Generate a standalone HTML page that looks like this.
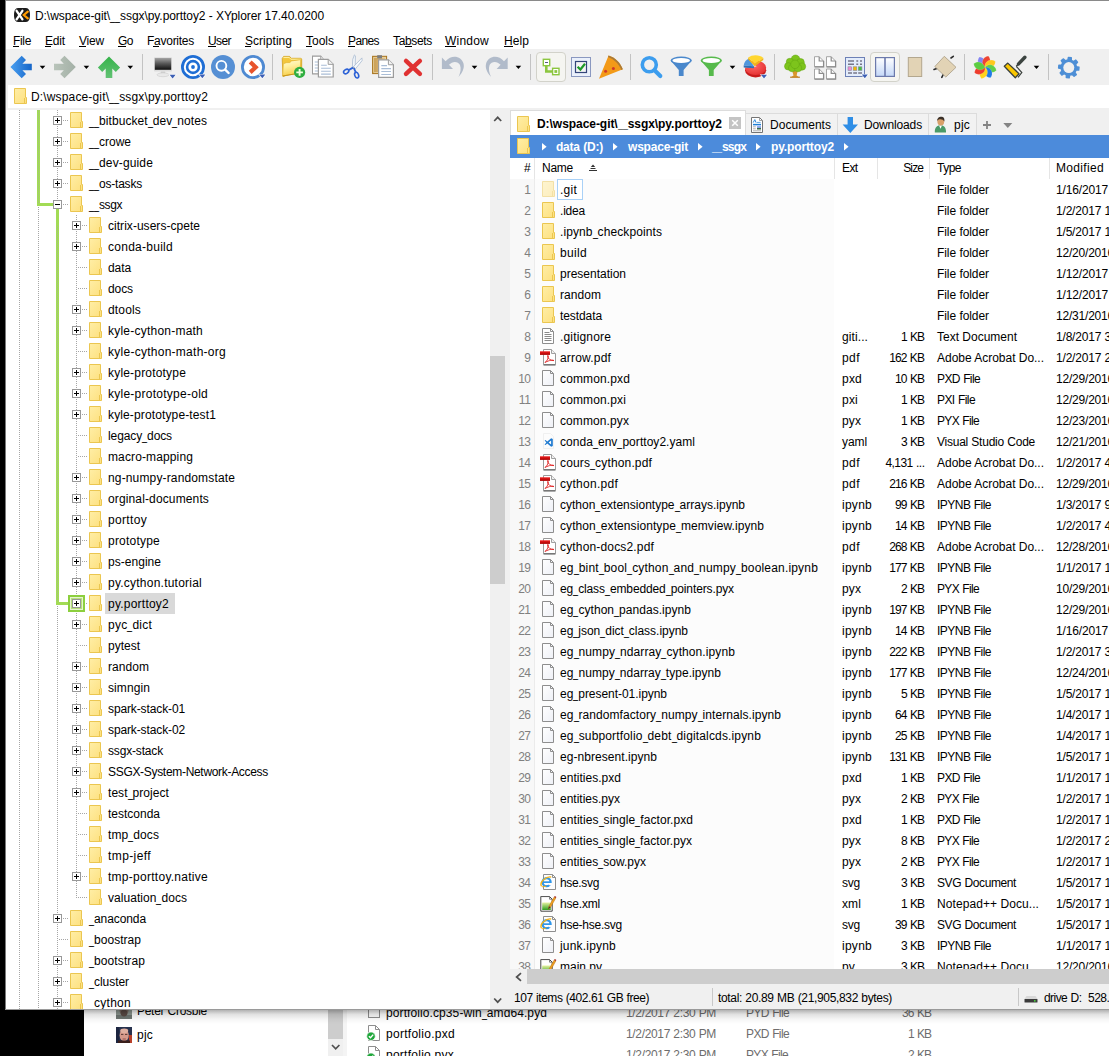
<!DOCTYPE html>
<html><head><meta charset="utf-8"><title>XYplorer</title>
<style>
html,body{margin:0;padding:0}
body{width:1109px;height:1056px;overflow:hidden;position:relative;background:#fff;font-family:"Liberation Sans", sans-serif;font-size:12px}
.t{position:absolute;white-space:pre;line-height:21px;height:21px;font-family:"Liberation Sans", sans-serif;font-size:12px}
div,svg,span{box-sizing:border-box}

.vd{position:absolute;width:1px;background:repeating-linear-gradient(to bottom,#a6a6a6 0 1px,transparent 1px 2px)}
.hd{position:absolute;height:1px;background:repeating-linear-gradient(to right,#a6a6a6 0 1px,transparent 1px 2px)}

.u{display:inline-block;width:5px;transform:scaleX(.75);transform-origin:0 50%;letter-spacing:0}
</style></head><body>
<svg width="0" height="0" style="position:absolute"><defs>
<linearGradient id="fg" x1="0" y1="0" x2="1" y2="1"><stop offset="0" stop-color="#ffeea6"/><stop offset="1" stop-color="#fde07f"/></linearGradient>
<symbol id="fold" viewBox="0 0 13 16"><path d="M.5 .5H11.5V9.5H12.5V15.5H.5Z" fill="url(#fg)" stroke="#ebc650"/><path d="M10.5 10V15" stroke="#ebc650" fill="none"/></symbol>
<symbol id="plus" viewBox="0 0 9 9"><rect x=".5" y=".5" width="8" height="8" fill="#fff" stroke="#989898"/><path d="M2 4.5H7M4.5 2V7" stroke="#000"/></symbol>
<symbol id="minus" viewBox="0 0 9 9"><rect x=".5" y=".5" width="8" height="8" fill="#fff" stroke="#989898"/><path d="M2 4.5H7" stroke="#000"/></symbol>
</defs></svg><svg width="0" height="0" style="position:absolute"><defs>
<linearGradient id="pgG" x1="0" y1="0" x2="1" y2="1"><stop offset="0" stop-color="#ffffff"/><stop offset="1" stop-color="#eef0f6"/></linearGradient>
<linearGradient id="nppG" x1="0" y1="0" x2="0" y2="1"><stop offset="0" stop-color="#e6f2a0"/><stop offset="1" stop-color="#2e9e1e"/></linearGradient>
<linearGradient id="redG" x1="0" y1="0" x2="0" y2="1"><stop offset="0" stop-color="#f02020"/><stop offset="1" stop-color="#a80000"/></linearGradient>
<symbol id="blank" viewBox="0 0 18 18"><path d="M2.5 .5H10.5L13.5 3.5V15.5H2.5Z" fill="url(#pgG)" stroke="#8e8e8e"/><path d="M10.5 .5V3.5H13.5" fill="none" stroke="#8e8e8e"/></symbol>
<symbol id="txt" viewBox="0 0 18 18"><path d="M2.5 .5H10.5L13.5 3.5V15.5H2.5Z" fill="#fff" stroke="#8e8e8e"/><path d="M10.5 .5V3.5H13.5" fill="none" stroke="#8e8e8e"/><path d="M4.5 4.5H9.5M4.5 6.5H11.5M4.5 8.5H11.5M4.5 10.5H11.5M4.5 12.5H11.5" stroke="#8a8a8a"/></symbol>
<symbol id="pdf" viewBox="0 0 18 18"><path d="M3.5 .5H11.5L15.5 4.5V15.5H3.5Z" fill="#fff" stroke="#9a9a9a"/><path d="M3.5 16H15.5" stroke="#555" stroke-width="1"/><path d="M11.5 .5V4.5H15.5" fill="#f0f0f0" stroke="#a0a0a0"/><rect x="0" y="2.3" width="10" height="3.6" fill="url(#redG)"/><path d="M5 13.5C7.5 11.5 8.6 8.6 8.3 6.8C8.1 6 7.3 6.3 7.5 7.3C8 9.6 10.5 11.8 14 11.6C13 10.8 9.5 11 5 13.5Z" fill="none" stroke="#e02020" stroke-width=".9"/></symbol>
<symbol id="vsc" viewBox="0 0 18 18"><path d="M3.5 .5H10.5L13.5 3.5V15.5H3.5Z" fill="#fcfcfc" stroke="#f0f0f0"/><path d="M11.2 5.2 12.8 6V13L11.2 13.8 7.3 10.4 5.4 11.9 4.6 11.4 6.4 9.5 4.6 7.6 5.4 7.1 7.3 8.6ZM11.1 7.5 8.6 9.5 11.1 11.5Z" fill="#1f7ad0" fill-rule="evenodd"/></symbol>
<symbol id="ie" viewBox="0 0 18 18"><path d="M3.5 .5H12.5L15.5 3.5V15.5H3.5Z" fill="#fdfdfd" stroke="#8e8e8e"/><path d="M12.5 .5V3.5H15.5" fill="none" stroke="#8e8e8e"/><circle cx="6.6" cy="8.2" r="4" fill="#fdfdfd" stroke="#2f96ea" stroke-width="2.3"/><rect x="3" y="7.3" width="8" height="1.7" fill="#2f96ea"/><path d="M7.6 9.1H12V11.2H9Z" fill="#fdfdfd"/><path d="M1.4 12C-.8 8.5 6 2 11.2 3" fill="none" stroke="#f2b41c" stroke-width="1.4"/><path d="M1.4 12C2.2 13.2 4.6 12.8 6.4 11.8" fill="none" stroke="#f2b41c" stroke-width="1"/></symbol>
<symbol id="npp" viewBox="0 0 18 18"><path d="M.8 1.5H9.5L12.2 4.2V16.2H.8Z" fill="#fff" stroke="#444" stroke-width="1"/><path d="M2 1V2.2M4 1V2.2M6 1V2.2M8 1V2.2" stroke="#777" stroke-width=".9"/><rect x="2.2" y="7.5" width="8.6" height="7.5" fill="url(#nppG)"/><path d="M9.5 1.5V4.2H12.2" fill="none" stroke="#666" stroke-width=".8"/><path d="M8.2 14.3 9 11.2 14.2 2 15.8 3 10.6 12.2Z" fill="#f0a020" stroke="#b87010" stroke-width=".5"/><path d="M14.2 2 14.8 .9 16.4 1.9 15.8 3Z" fill="#a01818"/><path d="M8.2 14.3 9 11.2 10.6 12.2Z" fill="#333"/></symbol>
</defs></svg>
<div style="position:absolute;left:0px;top:0px;width:1109px;height:1056px;background:#fff;"></div><div style="position:absolute;left:84px;top:1009px;width:1025px;height:47px;background:#fff;"></div><div style="position:absolute;left:84px;top:1009px;width:1025px;height:9px;background:linear-gradient(#c6c6c6,#e9e9e9 45%,#fff)"></div><div style="position:absolute;left:0px;top:0px;width:5px;height:1056px;background:#000;"></div><div style="position:absolute;left:0px;top:1009px;width:84px;height:47px;background:#000;"></div><div style="position:absolute;left:5px;top:0px;width:1104px;height:1px;background:#8a8a8a;"></div><div style="position:absolute;left:5px;top:0px;width:1px;height:1009px;background:#7a7a7a;"></div><div style="position:absolute;left:6px;top:49px;width:1103px;height:36px;background:#f0f0f0;"></div><div style="position:absolute;left:6px;top:85px;width:1103px;height:23px;background:#f0f0f0;"></div><div style="position:absolute;left:8px;top:85px;width:1101px;height:23px;background:#fff;"></div><div style="position:absolute;left:6px;top:108px;width:1103px;height:2px;background:#f0f0f0;"></div><div style="position:absolute;left:5px;top:1009px;width:1104px;height:1px;background:#9a9a9a;"></div><span class="t" style="left:35px;top:6px;color:#000;letter-spacing:-0.069px;word-spacing:0.069px;">D:\wspace-git\<span class="u">_</span><span class="u">_</span>ssgx\py.porttoy2 - XYplorer 17.40.0200</span><span class="t" style="left:13px;top:31px;color:#000;letter-spacing:-0.336px;">File</span><div style="position:absolute;left:13px;top:46px;width:6px;height:1px;background:#000;"></div><span class="t" style="left:45px;top:31px;color:#000;letter-spacing:-0.172px;">Edit</span><div style="position:absolute;left:45px;top:46px;width:6px;height:1px;background:#000;"></div><span class="t" style="left:79px;top:31px;color:#000;letter-spacing:-0.199px;">View</span><div style="position:absolute;left:79px;top:46px;width:7px;height:1px;background:#000;"></div><span class="t" style="left:118px;top:31px;color:#000;letter-spacing:-0.508px;">Go</span><div style="position:absolute;left:118px;top:46px;width:8px;height:1px;background:#000;"></div><span class="t" style="left:147px;top:31px;color:#000;letter-spacing:-0.262px;">Favorites</span><div style="position:absolute;left:153px;top:46px;width:6px;height:1px;background:#000;"></div><span class="t" style="left:208px;top:31px;color:#000;letter-spacing:-0.586px;">User</span><div style="position:absolute;left:208px;top:46px;width:8px;height:1px;background:#000;"></div><span class="t" style="left:245px;top:31px;color:#000;letter-spacing:0.035px;">Scripting</span><div style="position:absolute;left:245px;top:46px;width:6px;height:1px;background:#000;"></div><span class="t" style="left:306px;top:31px;color:#000;letter-spacing:-0.003px;">Tools</span><div style="position:absolute;left:306px;top:46px;width:6px;height:1px;background:#000;"></div><span class="t" style="left:348px;top:31px;color:#000;letter-spacing:-0.606px;">Panes</span><div style="position:absolute;left:348px;top:46px;width:7px;height:1px;background:#000;"></div><span class="t" style="left:393px;top:31px;color:#000;letter-spacing:-0.337px;">Tabsets</span><div style="position:absolute;left:405px;top:46px;width:7px;height:1px;background:#000;"></div><span class="t" style="left:445px;top:31px;color:#000;letter-spacing:0.219px;">Window</span><div style="position:absolute;left:445px;top:46px;width:11px;height:1px;background:#000;"></div><span class="t" style="left:504px;top:31px;color:#000;letter-spacing:0.078px;">Help</span><div style="position:absolute;left:504px;top:46px;width:9px;height:1px;background:#000;"></div><svg style="position:absolute;left:14px;top:8px" width="16" height="14"><path d="M4 0H12C14.8 0 16 3 16 7S14.8 14 12 14H4C1.2 14 0 11 0 7S1.2 0 4 0Z" fill="#1c1c1c"/><path d="M2.6 2.8 8.4 11.4M8.4 2.8 2.6 11.4" stroke="#fff" stroke-width="2.3" stroke-linecap="round"/><path d="M13.8 3.6 9.8 7 13.8 10.4" fill="none" stroke="#ff9a00" stroke-width="2.2" stroke-linecap="round"/></svg><span class="t" style="left:31px;top:87px;color:#000;letter-spacing:0.149px;">D:\wspace-git\<span class="u">_</span><span class="u">_</span>ssgx\py.porttoy2</span><div style="position:absolute;left:6px;top:110px;width:484px;height:899px;overflow:hidden;background:#fff"><div style="position:absolute;left:-6px;top:-110px;width:1109px;height:1056px"><div class="vd" style="left:19px;top:110px;height:900px"></div><div class="vd" style="left:38px;top:205px;height:805px"></div><div class="vd" style="left:57px;top:110px;height:900px"></div><div class="vd" style="left:76px;top:215px;height:683px"></div><div class="hd" style="left:63px;top:120px;width:6px"></div><svg style="position:absolute;left:70px;top:112px;" width="13" height="16"><use href="#fold"/></svg><span class="t" style="left:89px;top:111px;color:#000;letter-spacing:0.074px;"><span class="u">_</span><span class="u">_</span>bitbucket<span class="u">_</span>dev<span class="u">_</span>notes</span><div class="hd" style="left:63px;top:141px;width:6px"></div><svg style="position:absolute;left:70px;top:133px;" width="13" height="16"><use href="#fold"/></svg><span class="t" style="left:89px;top:132px;color:#000;letter-spacing:-0.003px;"><span class="u">_</span><span class="u">_</span>crowe</span><div class="hd" style="left:63px;top:162px;width:6px"></div><svg style="position:absolute;left:70px;top:154px;" width="13" height="16"><use href="#fold"/></svg><span class="t" style="left:89px;top:153px;color:#000;letter-spacing:0.142px;"><span class="u">_</span><span class="u">_</span>dev-guide</span><div class="hd" style="left:63px;top:183px;width:6px"></div><svg style="position:absolute;left:70px;top:175px;" width="13" height="16"><use href="#fold"/></svg><span class="t" style="left:89px;top:174px;color:#000;letter-spacing:-0.211px;"><span class="u">_</span><span class="u">_</span>os-tasks</span><div class="hd" style="left:63px;top:204px;width:6px"></div><svg style="position:absolute;left:70px;top:196px;" width="13" height="16"><use href="#fold"/></svg><span class="t" style="left:89px;top:195px;color:#000;letter-spacing:-0.422px;"><span class="u">_</span><span class="u">_</span>ssgx</span><div class="hd" style="left:82px;top:225px;width:6px"></div><svg style="position:absolute;left:89px;top:217px;" width="13" height="16"><use href="#fold"/></svg><span class="t" style="left:108px;top:216px;color:#000;letter-spacing:0.036px;">citrix-users-cpete</span><div class="hd" style="left:82px;top:246px;width:6px"></div><svg style="position:absolute;left:89px;top:238px;" width="13" height="16"><use href="#fold"/></svg><span class="t" style="left:108px;top:237px;color:#000;letter-spacing:0.268px;">conda-build</span><div class="hd" style="left:78px;top:267px;width:10px"></div><svg style="position:absolute;left:89px;top:259px;" width="13" height="16"><use href="#fold"/></svg><span class="t" style="left:108px;top:258px;color:#000;letter-spacing:-0.09px;">data</span><div class="hd" style="left:78px;top:288px;width:10px"></div><svg style="position:absolute;left:89px;top:280px;" width="13" height="16"><use href="#fold"/></svg><span class="t" style="left:108px;top:279px;color:#000;letter-spacing:-0.09px;">docs</span><div class="hd" style="left:82px;top:309px;width:6px"></div><svg style="position:absolute;left:89px;top:301px;" width="13" height="16"><use href="#fold"/></svg><span class="t" style="left:108px;top:300px;color:#000;letter-spacing:0.161px;">dtools</span><div class="hd" style="left:82px;top:330px;width:6px"></div><svg style="position:absolute;left:89px;top:322px;" width="13" height="16"><use href="#fold"/></svg><span class="t" style="left:108px;top:321px;color:#000;letter-spacing:0.227px;">kyle-cython-math</span><div class="hd" style="left:78px;top:351px;width:10px"></div><svg style="position:absolute;left:89px;top:343px;" width="13" height="16"><use href="#fold"/></svg><span class="t" style="left:108px;top:342px;color:#000;letter-spacing:0.264px;">kyle-cython-math-org</span><div class="hd" style="left:82px;top:372px;width:6px"></div><svg style="position:absolute;left:89px;top:364px;" width="13" height="16"><use href="#fold"/></svg><span class="t" style="left:108px;top:363px;color:#000;letter-spacing:0.188px;">kyle-prototype</span><div class="hd" style="left:82px;top:393px;width:6px"></div><svg style="position:absolute;left:89px;top:385px;" width="13" height="16"><use href="#fold"/></svg><span class="t" style="left:108px;top:384px;color:#000;letter-spacing:0.256px;">kyle-prototype-old</span><div class="hd" style="left:82px;top:414px;width:6px"></div><svg style="position:absolute;left:89px;top:406px;" width="13" height="16"><use href="#fold"/></svg><span class="t" style="left:108px;top:405px;color:#000;letter-spacing:0.13px;">kyle-prototype-test1</span><div class="hd" style="left:78px;top:435px;width:10px"></div><svg style="position:absolute;left:89px;top:427px;" width="13" height="16"><use href="#fold"/></svg><span class="t" style="left:108px;top:426px;color:#000;letter-spacing:-0.105px;">legacy<span class="u">_</span>docs</span><div class="hd" style="left:78px;top:456px;width:10px"></div><svg style="position:absolute;left:89px;top:448px;" width="13" height="16"><use href="#fold"/></svg><span class="t" style="left:108px;top:447px;color:#000;letter-spacing:0.125px;">macro-mapping</span><div class="hd" style="left:82px;top:477px;width:6px"></div><svg style="position:absolute;left:89px;top:469px;" width="13" height="16"><use href="#fold"/></svg><span class="t" style="left:108px;top:468px;color:#000;letter-spacing:0.147px;">ng-numpy-randomstate</span><div class="hd" style="left:82px;top:498px;width:6px"></div><svg style="position:absolute;left:89px;top:490px;" width="13" height="16"><use href="#fold"/></svg><span class="t" style="left:108px;top:489px;color:#000;letter-spacing:0.134px;">orginal-documents</span><div class="hd" style="left:82px;top:519px;width:6px"></div><svg style="position:absolute;left:89px;top:511px;" width="13" height="16"><use href="#fold"/></svg><span class="t" style="left:108px;top:510px;color:#000;letter-spacing:0.33px;">porttoy</span><div class="hd" style="left:82px;top:540px;width:6px"></div><svg style="position:absolute;left:89px;top:532px;" width="13" height="16"><use href="#fold"/></svg><span class="t" style="left:108px;top:531px;color:#000;letter-spacing:0.217px;">prototype</span><div class="hd" style="left:82px;top:561px;width:6px"></div><svg style="position:absolute;left:89px;top:553px;" width="13" height="16"><use href="#fold"/></svg><span class="t" style="left:108px;top:552px;color:#000;letter-spacing:0.031px;">ps-engine</span><div class="hd" style="left:82px;top:582px;width:6px"></div><svg style="position:absolute;left:89px;top:574px;" width="13" height="16"><use href="#fold"/></svg><span class="t" style="left:108px;top:573px;color:#000;letter-spacing:0.232px;">py.cython.tutorial</span><div class="hd" style="left:82px;top:603px;width:6px"></div><div style="position:absolute;left:105px;top:593px;width:70px;height:21px;background:#d9d9d9;"></div><svg style="position:absolute;left:89px;top:595px;" width="13" height="16"><use href="#fold"/></svg><span class="t" style="left:108px;top:594px;color:#000;letter-spacing:0.229px;">py.porttoy2</span><div class="hd" style="left:82px;top:624px;width:6px"></div><svg style="position:absolute;left:89px;top:616px;" width="13" height="16"><use href="#fold"/></svg><span class="t" style="left:108px;top:615px;color:#000;letter-spacing:0.232px;">pyc<span class="u">_</span>dict</span><div class="hd" style="left:78px;top:645px;width:10px"></div><svg style="position:absolute;left:89px;top:637px;" width="13" height="16"><use href="#fold"/></svg><span class="t" style="left:108px;top:636px;color:#000;letter-spacing:-0.003px;">pytest</span><div class="hd" style="left:82px;top:666px;width:6px"></div><svg style="position:absolute;left:89px;top:658px;" width="13" height="16"><use href="#fold"/></svg><span class="t" style="left:108px;top:657px;color:#000;letter-spacing:0.052px;">random</span><div class="hd" style="left:82px;top:687px;width:6px"></div><svg style="position:absolute;left:89px;top:679px;" width="13" height="16"><use href="#fold"/></svg><span class="t" style="left:108px;top:678px;color:#000;letter-spacing:0.092px;">simngin</span><div class="hd" style="left:82px;top:708px;width:6px"></div><svg style="position:absolute;left:89px;top:700px;" width="13" height="16"><use href="#fold"/></svg><span class="t" style="left:108px;top:699px;color:#000;letter-spacing:-0.122px;">spark-stack-01</span><div class="hd" style="left:82px;top:729px;width:6px"></div><svg style="position:absolute;left:89px;top:721px;" width="13" height="16"><use href="#fold"/></svg><span class="t" style="left:108px;top:720px;color:#000;letter-spacing:-0.122px;">spark-stack-02</span><div class="hd" style="left:82px;top:750px;width:6px"></div><svg style="position:absolute;left:89px;top:742px;" width="13" height="16"><use href="#fold"/></svg><span class="t" style="left:108px;top:741px;color:#000;letter-spacing:-0.169px;">ssgx-stack</span><div class="hd" style="left:82px;top:771px;width:6px"></div><svg style="position:absolute;left:89px;top:763px;" width="13" height="16"><use href="#fold"/></svg><span class="t" style="left:108px;top:762px;color:#000;letter-spacing:-0.309px;">SSGX-System-Network-Access</span><div class="hd" style="left:82px;top:792px;width:6px"></div><svg style="position:absolute;left:89px;top:784px;" width="13" height="16"><use href="#fold"/></svg><span class="t" style="left:108px;top:783px;color:#000;letter-spacing:0.057px;">test<span class="u">_</span>project</span><div class="hd" style="left:78px;top:813px;width:10px"></div><svg style="position:absolute;left:89px;top:805px;" width="13" height="16"><use href="#fold"/></svg><span class="t" style="left:108px;top:804px;color:#000;letter-spacing:-0.005px;">testconda</span><div class="hd" style="left:78px;top:834px;width:10px"></div><svg style="position:absolute;left:89px;top:826px;" width="13" height="16"><use href="#fold"/></svg><span class="t" style="left:108px;top:825px;color:#000;letter-spacing:0.089px;">tmp<span class="u">_</span>docs</span><div class="hd" style="left:78px;top:855px;width:10px"></div><svg style="position:absolute;left:89px;top:847px;" width="13" height="16"><use href="#fold"/></svg><span class="t" style="left:108px;top:846px;color:#000;letter-spacing:0.4px;">tmp-jeff</span><div class="hd" style="left:82px;top:876px;width:6px"></div><svg style="position:absolute;left:89px;top:868px;" width="13" height="16"><use href="#fold"/></svg><span class="t" style="left:108px;top:867px;color:#000;letter-spacing:0.269px;">tmp-porttoy.native</span><div class="hd" style="left:78px;top:897px;width:10px"></div><svg style="position:absolute;left:89px;top:889px;" width="13" height="16"><use href="#fold"/></svg><span class="t" style="left:108px;top:888px;color:#000;letter-spacing:0.046px;">valuation<span class="u">_</span>docs</span><div class="hd" style="left:63px;top:918px;width:6px"></div><svg style="position:absolute;left:70px;top:910px;" width="13" height="16"><use href="#fold"/></svg><span class="t" style="left:89px;top:909px;color:#000;letter-spacing:-0.09px;"><span class="u">_</span>anaconda</span><div class="hd" style="left:59px;top:939px;width:10px"></div><svg style="position:absolute;left:70px;top:931px;" width="13" height="16"><use href="#fold"/></svg><span class="t" style="left:89px;top:930px;color:#000;letter-spacing:0.037px;"><span class="u">_</span>boostrap</span><div class="hd" style="left:63px;top:960px;width:6px"></div><svg style="position:absolute;left:70px;top:952px;" width="13" height="16"><use href="#fold"/></svg><span class="t" style="left:89px;top:951px;color:#000;letter-spacing:0.106px;"><span class="u">_</span>bootstrap</span><div class="hd" style="left:63px;top:981px;width:6px"></div><svg style="position:absolute;left:70px;top:973px;" width="13" height="16"><use href="#fold"/></svg><span class="t" style="left:89px;top:972px;color:#000;letter-spacing:-0.049px;"><span class="u">_</span>cluster</span><div class="hd" style="left:63px;top:1002px;width:6px"></div><svg style="position:absolute;left:70px;top:994px;" width="13" height="16"><use href="#fold"/></svg><span class="t" style="left:89px;top:993px;color:#000;letter-spacing:0.273px;"><span class="u">_</span>cython</span><div style="position:absolute;left:37px;top:110px;width:3px;height:96px;background:#a2db55;"></div><div style="position:absolute;left:37px;top:203px;width:16px;height:3px;background:#a2db55;"></div><div style="position:absolute;left:56px;top:209px;width:3px;height:396px;background:#a2db55;"></div><div style="position:absolute;left:56px;top:602px;width:12px;height:3px;background:#a2db55;"></div><div class="vd" style="left:38px;top:110px;height:94px;opacity:.55"></div><div class="vd" style="left:57px;top:226px;height:376px;opacity:.55"></div><div style="position:absolute;left:68px;top:595px;width:17px;height:17px;background:#b7e07c;border:2px solid #8ccf3e;box-shadow:inset 0 0 0 1px #e6f5cf"></div><svg style="position:absolute;left:53px;top:116px;" width="9" height="9"><use href="#plus"/></svg><svg style="position:absolute;left:53px;top:137px;" width="9" height="9"><use href="#plus"/></svg><svg style="position:absolute;left:53px;top:158px;" width="9" height="9"><use href="#plus"/></svg><svg style="position:absolute;left:53px;top:179px;" width="9" height="9"><use href="#plus"/></svg><svg style="position:absolute;left:53px;top:200px;" width="9" height="9"><use href="#minus"/></svg><svg style="position:absolute;left:72px;top:221px;" width="9" height="9"><use href="#plus"/></svg><svg style="position:absolute;left:72px;top:242px;" width="9" height="9"><use href="#plus"/></svg><svg style="position:absolute;left:72px;top:305px;" width="9" height="9"><use href="#plus"/></svg><svg style="position:absolute;left:72px;top:326px;" width="9" height="9"><use href="#plus"/></svg><svg style="position:absolute;left:72px;top:368px;" width="9" height="9"><use href="#plus"/></svg><svg style="position:absolute;left:72px;top:389px;" width="9" height="9"><use href="#plus"/></svg><svg style="position:absolute;left:72px;top:410px;" width="9" height="9"><use href="#plus"/></svg><svg style="position:absolute;left:72px;top:473px;" width="9" height="9"><use href="#plus"/></svg><svg style="position:absolute;left:72px;top:494px;" width="9" height="9"><use href="#plus"/></svg><svg style="position:absolute;left:72px;top:515px;" width="9" height="9"><use href="#plus"/></svg><svg style="position:absolute;left:72px;top:536px;" width="9" height="9"><use href="#plus"/></svg><svg style="position:absolute;left:72px;top:557px;" width="9" height="9"><use href="#plus"/></svg><svg style="position:absolute;left:72px;top:578px;" width="9" height="9"><use href="#plus"/></svg><svg style="position:absolute;left:72px;top:599px;" width="9" height="9"><use href="#plus"/></svg><svg style="position:absolute;left:72px;top:620px;" width="9" height="9"><use href="#plus"/></svg><svg style="position:absolute;left:72px;top:662px;" width="9" height="9"><use href="#plus"/></svg><svg style="position:absolute;left:72px;top:683px;" width="9" height="9"><use href="#plus"/></svg><svg style="position:absolute;left:72px;top:704px;" width="9" height="9"><use href="#plus"/></svg><svg style="position:absolute;left:72px;top:725px;" width="9" height="9"><use href="#plus"/></svg><svg style="position:absolute;left:72px;top:746px;" width="9" height="9"><use href="#plus"/></svg><svg style="position:absolute;left:72px;top:767px;" width="9" height="9"><use href="#plus"/></svg><svg style="position:absolute;left:72px;top:788px;" width="9" height="9"><use href="#plus"/></svg><svg style="position:absolute;left:72px;top:872px;" width="9" height="9"><use href="#plus"/></svg><svg style="position:absolute;left:53px;top:914px;" width="9" height="9"><use href="#plus"/></svg><svg style="position:absolute;left:53px;top:956px;" width="9" height="9"><use href="#plus"/></svg><svg style="position:absolute;left:53px;top:977px;" width="9" height="9"><use href="#plus"/></svg><svg style="position:absolute;left:53px;top:998px;" width="9" height="9"><use href="#plus"/></svg></div></div><svg style="position:absolute;left:0;top:0" width="1109" height="90" viewBox="0 0 1109 90"><defs>
<linearGradient id="gb" x1="0" y1="0" x2="1" y2="0"><stop offset="0" stop-color="#4a9ff0"/><stop offset="1" stop-color="#1565c8"/></linearGradient>
<linearGradient id="gg" x1="0" y1="0" x2="0" y2="1"><stop offset="0" stop-color="#35b34a"/><stop offset="1" stop-color="#62c274"/></linearGradient>
<linearGradient id="gf" x1="0" y1="0" x2="1" y2="0"><stop offset="0" stop-color="#b9c4ba"/><stop offset="1" stop-color="#a3b0a6"/></linearGradient>
<linearGradient id="mon" x1="0" y1="0" x2="0" y2="1"><stop offset="0" stop-color="#a4a4a4"/><stop offset=".45" stop-color="#5a5a5a"/><stop offset="1" stop-color="#101010"/></linearGradient>
<linearGradient id="fy" x1="0" y1="0" x2="1" y2="1"><stop offset="0" stop-color="#fff0a0"/><stop offset="1" stop-color="#f2c230"/></linearGradient>
<linearGradient id="fyf" x1="0" y1="0" x2=".25" y2="1"><stop offset="0" stop-color="#fffbd8"/><stop offset=".45" stop-color="#fff0a0"/><stop offset="1" stop-color="#f7cf4c"/></linearGradient><linearGradient id="pane" x1="0" y1="0" x2="0" y2="1"><stop offset="0" stop-color="#ffffff"/><stop offset="1" stop-color="#c4d8f8"/></linearGradient>
<linearGradient id="clipb" x1="0" y1="0" x2="1" y2="0"><stop offset="0" stop-color="#c79a4e"/><stop offset="1" stop-color="#e4c790"/></linearGradient>
<radialGradient id="pie" cx=".4" cy=".35" r=".8"><stop offset="0" stop-color="#ff6a6a"/><stop offset="1" stop-color="#e02828"/></radialGradient>
<path id="dd" d="M0 0H5.6L2.8 3.2Z" fill="#000"/>
<path id="bdd" d="M0 0H6L3 3.6Z" fill="#3c5fb4" stroke="#fff" stroke-width="1.2" stroke-opacity=".85" paint-order="stroke"/>
<g id="doc"><path d="M.6 .6H10.4L15.4 5.6V18.4H.6Z" fill="#fff" stroke="#9c9c9c" stroke-width="1.2"/><path d="M10.4 .6V5.6H15.4" fill="#f2f2f2" stroke="#9c9c9c" stroke-width="1"/><path d="M3.3 6.5H9M3.3 9.5H13M3.3 12.5H13M3.3 15.5H13" stroke="#a9bdd6" stroke-width="1.1"/></g>
<g id="pg"><path d="M.5 .5H5.2L9.5 4.8V10.5H.5Z" fill="#fff" stroke="#a6a6a6"/><path d="M9.6 4.8V10.6H.5" fill="none" stroke="#8c8c8c" stroke-width="1.3"/><path d="M5.2 .5V4.8H9.5" fill="none" stroke="#8c8c8c" stroke-width="1.2"/></g>
</defs><rect x="142" y="54" width="1" height="26" fill="#c3c3c3"/><rect x="272" y="54" width="1" height="26" fill="#c3c3c3"/><rect x="432" y="54" width="1" height="26" fill="#c3c3c3"/><rect x="530" y="54" width="1" height="26" fill="#c3c3c3"/><rect x="630" y="54" width="1" height="26" fill="#c3c3c3"/><rect x="774" y="54" width="1" height="26" fill="#c3c3c3"/><rect x="964" y="54" width="1" height="26" fill="#c3c3c3"/><rect x="1048" y="54" width="1" height="26" fill="#c3c3c3"/><use href="#dd" x="39.7" y="65.8"/><use href="#dd" x="83.6" y="65.8"/><use href="#dd" x="127.5" y="65.8"/><use href="#dd" x="471.7" y="65.8"/><use href="#dd" x="515.6" y="65.8"/><use href="#dd" x="729.7" y="65.8"/><use href="#dd" x="1033.7" y="65.8"/><path d="M10.4 67 21.7 55.8 26 60.1 22.4 63.7H31.8V70.3H22.4L26 73.9 21.7 78.3Z" fill="url(#gb)"/><path d="M75.8 67 64.5 55.8 60.2 60.1 63.8 63.7H54V70.3H63.8L60.2 73.9 64.5 78.3Z" fill="url(#gf)"/><path d="M109 56.5 120.1 67.6 115.8 71.9 112.3 68.4V78H105.7V68.4L102.2 71.9 97.9 67.6Z" fill="url(#gg)"/><rect x="154" y="57.3" width="18" height="14.2" rx=".8" fill="#dcdcdc"/><rect x="154.8" y="58" width="16.4" height="11.8" fill="url(#mon)"/><path d="M161 71.5H165L165.6 73.6H160.4Z" fill="#cfcfcf"/><ellipse cx="163" cy="74.8" rx="6" ry="1.9" fill="#e9e9e9" stroke="#cbcbcb" stroke-width=".6"/><use href="#bdd" x="169.6" y="74.8"/><circle cx="193" cy="67" r="12" fill="#fff"/><circle cx="193" cy="67" r="10.6" fill="none" stroke="#1f6ed4" stroke-width="2.8"/><circle cx="193" cy="67" r="5.9" fill="none" stroke="#1f6ed4" stroke-width="2.6"/><circle cx="193" cy="67" r="1.9" fill="#1f6ed4"/><use href="#bdd" x="199.3" y="74.6"/><circle cx="223" cy="67" r="12" fill="#558fd4"/><circle cx="221.4" cy="65.8" r="4.9" fill="none" stroke="#fff" stroke-width="1.9"/><path d="M225.2 69.6 228.6 73" stroke="#fff" stroke-width="2.4" stroke-linecap="round"/><circle cx="253" cy="67" r="10.6" fill="#fff" stroke="#4f8ad2" stroke-width="2.8"/><path d="M250.2 62 255.7 67.2 250.2 72.4" fill="none" stroke="#e8542c" stroke-width="4.2" stroke-linejoin="miter"/><use href="#bdd" x="259.3" y="74.6"/><path d="M282.2 58.6 283.6 56.4H289.6L291.2 58.3H300.4Q301.7 58.3 301.7 59.6V70.5L283 76.4Z" fill="#f3c73c" stroke="#d0a01c" stroke-width=".8"/><path d="M283.4 57.4H289.2L290.8 59.2H300.8" fill="none" stroke="#fff3a8" stroke-width="1"/><path d="M283.3 63.8 286.2 62.7 289.9 62.5 291.6 60.9 300.7 59.7 300.3 73 282.7 76Z" fill="url(#fyf)" stroke="#e2b432" stroke-width=".7"/><path d="M282.7 76 300.3 73" stroke="#c8961a" stroke-width="1"/><circle cx="299.6" cy="72.4" r="5.6" fill="#2fae40"/><path d="M296.3 72.4H302.9M299.6 69.1V75.7" stroke="#f4ffe0" stroke-width="1.9"/><use href="#doc" transform="translate(312 55.6) scale(.84 .99)"/><use href="#doc" transform="translate(317.8 58.8) scale(1 .99)"/><path d="M354.4 54.9 355.4 55.8 355.2 67.6 352.3 68.6 352.7 59.5Z" fill="#f2f6fa" stroke="#9fb3cb" stroke-width=".7"/><path d="M361.9 57.9 362.1 60.6 355.2 69.2 353 67.2Z" fill="#f6f9fc" stroke="#9fb3cb" stroke-width=".7"/><circle cx="353.7" cy="67.9" r="1.1" fill="#9aa8b8"/><path d="M353 67.6 348.4 70.2" stroke="#2d62d6" stroke-width="1.8"/><path d="M353.9 68.2 355.8 72.3" stroke="#2d62d6" stroke-width="1.8"/><ellipse cx="346.1" cy="71.4" rx="2.8" ry="1.9" transform="rotate(-35 346.3 71.3)" fill="none" stroke="#2d62d6" stroke-width="1.6"/><ellipse cx="356.6" cy="75.2" rx="1.9" ry="2.9" transform="rotate(-20 356.5 75)" fill="none" stroke="#2d62d6" stroke-width="1.6"/><rect x="372.6" y="56.3" width="14" height="17.3" fill="url(#clipb)" stroke="#a8741e" stroke-width="1"/><rect x="373.7" y="57.4" width="11.8" height="15.1" fill="none" stroke="#ecd9a8" stroke-width=".7"/><rect x="377.2" y="55.2" width="4.8" height="3.2" fill="#7c7c7c"/><use href="#doc" transform="translate(378 59.2) scale(1 .99)"/><path d="M406 60.9 419.9 73.9M419.9 60.9 406 73.9" stroke="#e03232" stroke-width="4.4" stroke-linecap="round"/><path id="undo" d="M441.9 57.4V69H453L449 64.8C452.5 60.8 458 61 460 65C461.3 68.5 460.6 72.5 458.5 77C462.5 72.5 464.7 68 463.5 63.5C461.5 56.3 452 53.6 445.6 61.2Z" fill="#b1bbca"/><use href="#undo" transform="translate(949.6 0) scale(-1 1)"/><rect x="536.5" y="52.5" width="29" height="29" rx="3.5" fill="#f5f5f1" stroke="#d2d2ca"/><path d="M546.3 66V71.5H552" fill="none" stroke="#8cc63f" stroke-width="2.6"/><rect x="543.3" y="59.3" width="6.4" height="6.4" fill="#fff" stroke="#8cc63f" stroke-width="1.4"/><path d="M545 62.5H548" stroke="#555a80" stroke-width="1"/><rect x="552.6" y="68.3" width="6.4" height="6.4" fill="#fff" stroke="#8cc63f" stroke-width="1.4"/><rect x="554.4" y="70.1" width="2.8" height="2.8" fill="#8cc63f"/><rect x="571.5" y="57.5" width="19" height="19" fill="#eaf0fb" stroke="#8a98c0"/><rect x="575.5" y="61.5" width="11" height="11" fill="#f4f4f4" stroke="#33457a" stroke-width="1.2"/><path d="M577.6 66.7 580.4 69.5 585 63.8" fill="none" stroke="#1f9a2a" stroke-width="2.2"/><path d="M599 78.8 608.6 55.6C615 57.5 620.5 63 622.8 69.3Z" fill="#f39a18"/><path d="M608.6 55.6C615 57.5 620.5 63 622.8 69.3L621.4 70C619 64 614 59 608 57Z" fill="#a87a3a"/><circle cx="605.6" cy="71.2" r="1.5" fill="#d0382a"/><circle cx="613.4" cy="68.4" r="1.5" fill="#d0382a"/><circle cx="649.3" cy="64.8" r="7" fill="none" stroke="#3c9dee" stroke-width="3.6"/><path d="M654.8 70.5 660.3 76" stroke="#3c9dee" stroke-width="4.2" stroke-linecap="round"/><path d="M670.6 60.6 678.8000000000001 70V76H683.6V70L691.8000000000001 60.6Z" fill="#4a88cc"/><ellipse cx="681.2" cy="60.4" rx="10.6" ry="3.9" fill="#4a88cc"/><ellipse cx="681.2" cy="60.4" rx="8.8" ry="2.5" fill="#fff"/><path d="M700.6999999999999 60.6 708.9 70V76H713.6999999999999V70L721.9 60.6Z" fill="#57ba4c"/><ellipse cx="711.3" cy="60.4" rx="10.6" ry="3.9" fill="#57ba4c"/><ellipse cx="711.3" cy="60.4" rx="8.8" ry="2.5" fill="#fff"/><ellipse cx="755.6" cy="70.2" rx="10.6" ry="7.2" fill="#c81c1c"/><ellipse cx="755.6" cy="67.8" rx="10.6" ry="7.2" fill="url(#pie)"/><path d="M745 67.6C744.6 63 748 61 751 60.5L756.5 66.5Z" fill="#f0f0f0"/><path d="M754 66.3 743.7 65.6C744 61.8 746.5 59.6 749 58.8Z" fill="#4f96dc"/><path d="M754 66.3 743.7 65.6 743.7 67.4 754 68.2Z" fill="#2f6fb4"/><path d="M754.8 64 748.2 57.6C751.5 54.4 760 54.2 763.3 58Z" fill="#ffd62e"/><path d="M754.8 64 763.3 58 763.3 60 754.8 66.2 748.2 59.6 748.2 57.6Z" fill="#f0b418"/><use href="#bdd" x="761" y="74.8"/><path d="M792.3 71 793.5 75.5 790.5 77.6H799.5L796.6 75.5 797.7 71Z" fill="#d9972c"/><path d="M790 77.2H800" stroke="#b9781c" stroke-width="1"/><circle cx="795.5" cy="59.3" r="4.3" fill="#7dc41c" stroke="#62a512" stroke-width=".5"/><circle cx="790" cy="62" r="3.8" fill="#7dc41c" stroke="#62a512" stroke-width=".5"/><circle cx="800.5" cy="62.3" r="3.8" fill="#7dc41c" stroke="#62a512" stroke-width=".5"/><circle cx="788.2" cy="66.3" r="3.7" fill="#7dc41c" stroke="#62a512" stroke-width=".5"/><circle cx="802" cy="66.5" r="3.7" fill="#7dc41c" stroke="#62a512" stroke-width=".5"/><circle cx="792.2" cy="68" r="3.8" fill="#7dc41c" stroke="#62a512" stroke-width=".5"/><circle cx="798" cy="68" r="3.8" fill="#7dc41c" stroke="#62a512" stroke-width=".5"/><circle cx="795" cy="64.3" r="4.3" fill="#7dc41c" stroke="#62a512" stroke-width=".5"/><use href="#pg" x="814" y="56.2"/><use href="#pg" x="826" y="56.2"/><use href="#pg" x="814" y="68.5"/><use href="#pg" x="826" y="68.5"/><rect x="845.5" y="57.5" width="19" height="19" fill="#e3ecfb" stroke="#6d80b6"/><path d="M848 61H854M848 64.2H854M848 73H852M853.2 73H857M858.2 73H862" stroke="#77778a" stroke-width="1.5"/><path d="M856.3 61H858.2M860 61H862M856.3 64.2H858.2M860 64.2H862" stroke="#77778a" stroke-width="1.5"/><rect x="848" y="66.8" width="3.6" height="3.6" fill="#f08ad0" stroke="#8a8a9a" stroke-width=".6"/><rect x="853.2" y="66.8" width="3.6" height="3.6" fill="#f5b800" stroke="#8a8a9a" stroke-width=".6"/><rect x="858.3" y="66.8" width="3.6" height="3.6" fill="#48c040" stroke="#8a8a9a" stroke-width=".6"/><use href="#bdd" x="861.8" y="74.6"/><rect x="870.5" y="52.5" width="29" height="29" rx="3.5" fill="#f5f5f1" stroke="#d2d2ca"/><rect x="875.6" y="57.6" width="18.8" height="18.8" fill="url(#pane)" stroke="#6c7aac" stroke-width="1.2"/><path d="M885 57.5V76.5" stroke="#6c7aac" stroke-width="1.6"/><rect x="908.3" y="57.5" width="13.4" height="19" fill="#e2d3b5" stroke="#b3a78e"/><path d="M951 58 953.3 56.3M934 69.5 937.5 68.2M941.8 77.4 943.5 74" stroke="#2a2a2a" stroke-width="1.6" stroke-linecap="round"/><path d="M944.3 56.3 956 67.3 945.8 77 934.8 66.6Z" fill="#e2d3b5" stroke="#a89c84" stroke-width=".8"/><path d="M0 0C1.5 -6 9 -6.2 11.8 -1.2C9.5 3.6 4 4 0 0Z" fill="#8484f2" stroke="#fff" stroke-opacity=".35" stroke-width=".4" transform="translate(985 67.3) rotate(-113)"/><path d="M0 0C1.5 -6 9 -6.2 11.8 -1.2C9.5 3.6 4 4 0 0Z" fill="#ee4432" stroke="#fff" stroke-opacity=".35" stroke-width=".4" transform="translate(985 67.3) rotate(-68)"/><path d="M0 0C1.5 -6 9 -6.2 11.8 -1.2C9.5 3.6 4 4 0 0Z" fill="#ffc81c" stroke="#fff" stroke-opacity=".35" stroke-width=".4" transform="translate(985 67.3) rotate(-23)"/><path d="M0 0C1.5 -6 9 -6.2 11.8 -1.2C9.5 3.6 4 4 0 0Z" fill="#62cf48" stroke="#fff" stroke-opacity=".35" stroke-width=".4" transform="translate(985 67.3) rotate(22)"/><path d="M0 0C1.5 -6 9 -6.2 11.8 -1.2C9.5 3.6 4 4 0 0Z" fill="#1f7ae6" stroke="#fff" stroke-opacity=".35" stroke-width=".4" transform="translate(985 67.3) rotate(68)"/><path d="M0 0C1.5 -6 9 -6.2 11.8 -1.2C9.5 3.6 4 4 0 0Z" fill="#ffd21c" stroke="#fff" stroke-opacity=".35" stroke-width=".4" transform="translate(985 67.3) rotate(113)"/><path d="M0 0C1.5 -6 9 -6.2 11.8 -1.2C9.5 3.6 4 4 0 0Z" fill="#ee3c2c" stroke="#fff" stroke-opacity=".35" stroke-width=".4" transform="translate(985 67.3) rotate(158)"/><path d="M0 0C1.5 -6 9 -6.2 11.8 -1.2C9.5 3.6 4 4 0 0Z" fill="#5ccc42" stroke="#fff" stroke-opacity=".35" stroke-width=".4" transform="translate(985 67.3) rotate(203)"/><path d="M1016.3 66.3 1021.8 72.6 1018 77.3" fill="none" stroke="#3a403c" stroke-width="1.2"/><path d="M1016.3 66.3 1019 63.5" stroke="#3c4440" stroke-width="1.6"/><path d="M1018.6 63.9 1024.9 57.3" stroke="#3c4440" stroke-width="3.5" stroke-linecap="round"/><path d="M1004.3 66.2 1007.8 63.1 1019 73.7 1015.3 77.7Z" fill="#fbc700" stroke="#3a403c" stroke-width="1.3" stroke-linejoin="round"/><path d="M1067.9 60.0 L1068.4 57.4 L1071.3 57.7 L1071.3 60.3 L1073.5 61.5 L1075.8 60.1 L1077.5 62.3 L1075.7 64.2 L1076.4 66.7 L1079.0 67.2 L1078.7 70.1 L1076.1 70.1 L1074.9 72.3 L1076.3 74.6 L1074.1 76.3 L1072.2 74.5 L1069.7 75.2 L1069.2 77.8 L1066.3 77.5 L1066.3 74.9 L1064.1 73.7 L1061.8 75.1 L1060.1 72.9 L1061.9 71.0 L1061.2 68.5 L1058.6 68.0 L1058.9 65.1 L1061.5 65.1 L1062.7 62.9 L1061.3 60.6 L1063.5 58.9 L1065.4 60.7Z" fill="#4e8fd6" stroke="#4e8fd6" stroke-width="1.4" stroke-linejoin="round"/><circle cx="1068.8" cy="67.6" r="5.5" fill="#f0f0f0"/></svg><svg style="position:absolute;left:14px;top:88px;" width="13" height="16"><use href="#fold"/></svg><div style="position:absolute;left:490px;top:110px;width:20px;height:899px;background:#f0f0f0;"></div><div style="position:absolute;left:490px;top:356px;width:15px;height:228px;background:#cdcdcd;"></div><svg style="position:absolute;left:490px;top:110px" width="20" height="899"><path d="M4.2 11 7.7 7.3 11.2 11" fill="none" stroke="#505050" stroke-width="1.7"/><path d="M4.2 888.5 7.7 892.2 11.2 888.5" fill="none" stroke="#505050" stroke-width="1.7"/></svg><div style="position:absolute;left:510px;top:110px;width:599px;height:25px;background:#f0f0f0;"></div><div style="position:absolute;left:510px;top:110px;width:236px;height:25px;background:#fff;border:1px solid #dcdcdc;border-bottom:none"></div><div style="position:absolute;left:746px;top:113px;width:231px;height:22px;background:#f2f2f2;border-top:1px solid #dcdcdc;border-right:1px solid #dcdcdc"></div><div style="position:absolute;left:837px;top:114px;width:1px;height:21px;background:#dcdcdc;"></div><div style="position:absolute;left:928px;top:114px;width:1px;height:21px;background:#dcdcdc;"></div><svg style="position:absolute;left:517px;top:116px;" width="13" height="16"><use href="#fold"/></svg><span class="t" style="left:537px;top:114px;color:#000;letter-spacing:-0.05px;font-weight:700;">D:\wspace-git\<span class="u">_</span><span class="u">_</span>ssgx\py.porttoy2</span><svg style="position:absolute;left:729px;top:117px" width="12" height="12"><rect width="12" height="12" fill="#c4c4c4"/><path d="M3.2 3.2 8.8 8.8M8.8 3.2 3.2 8.8" stroke="#fff" stroke-width="1.5"/></svg><svg style="position:absolute;left:751px;top:117px" width="12" height="16"><path d="M.5 .5H8.5L11.5 3.5V15.5H.5Z" fill="#fff" stroke="#747474"/><path d="M8.5 .5V3.5H11.5" fill="none" stroke="#8a8a8a" stroke-width=".8"/><path d="M2.2 5.6 3.8 2.6 5 5.6" fill="none" stroke="#2f8ad8" stroke-width="1"/><path d="M5.8 5.4H9.6" stroke="#4a9ae0" stroke-width=".9"/><path d="M2 7.6H10" stroke="#1f7fd6" stroke-width="1.5"/><path d="M2 9.8H4.8M2 11.8H4.8M2 13.8H10" stroke="#a8a8a8" stroke-width=".9"/><rect x="6" y="9.3" width="4" height="1.4" fill="#6a8af0"/><rect x="6" y="10.9" width="4" height="1.6" fill="#3a6a4a"/></svg><span class="t" style="left:770px;top:115px;color:#000;letter-spacing:0.033px;">Documents</span><svg style="position:absolute;left:842px;top:117px" width="17" height="17"><path d="M5.6 0H11V7.5H16L8.3 16 .6 7.5H5.6Z" fill="#2f8ee6"/></svg><span class="t" style="left:864px;top:115px;color:#000;letter-spacing:-0.153px;">Downloads</span><svg style="position:absolute;left:934px;top:116px" width="14" height="17"><path d="M.8 16.5C.5 11.5 3 9.2 6.5 9.2S12.2 11.5 12 16.5Z" fill="#4a9a68"/><path d="M5 9.5 6.5 12.8 8 9.5Z" fill="#fff"/><ellipse cx="6.8" cy="5.6" rx="3.4" ry="4" fill="#d9a06a"/><path d="M3.2 5C3 1.5 6 .3 8 .8C10.2 1.2 10.8 3.5 10.3 5.5C9.5 3.8 7.5 3 5.5 3.3C4.2 3.5 3.6 4.2 3.2 5Z" fill="#3a3028"/></svg><span class="t" style="left:954px;top:115px;color:#000;letter-spacing:0.219px;">pjc</span><svg style="position:absolute;left:983px;top:121px" width="30" height="9"><path d="M0 4H8M4 0V8" stroke="#848484" stroke-width="1.8"/><path d="M20.3 2H29.3L24.8 7Z" fill="#848484"/></svg><div style="position:absolute;left:510px;top:135px;width:599px;height:23px;background:#4c8bdb;"></div><svg style="position:absolute;left:517px;top:138px;" width="13" height="16"><use href="#fold"/></svg><svg style="position:absolute;left:542px;top:143px" width="5" height="8"><path d="M0 0 4.6 3.7 0 7.4Z" fill="#fff"/></svg><svg style="position:absolute;left:613px;top:143px" width="5" height="8"><path d="M0 0 4.6 3.7 0 7.4Z" fill="#fff"/></svg><svg style="position:absolute;left:698px;top:143px" width="5" height="8"><path d="M0 0 4.6 3.7 0 7.4Z" fill="#fff"/></svg><svg style="position:absolute;left:756px;top:143px" width="5" height="8"><path d="M0 0 4.6 3.7 0 7.4Z" fill="#fff"/></svg><svg style="position:absolute;left:844px;top:143px" width="5" height="8"><path d="M0 0 4.6 3.7 0 7.4Z" fill="#fff"/></svg><span class="t" style="left:556px;top:137px;color:#fff;letter-spacing:-0.209px;word-spacing:0.209px;font-weight:700;">data (D:)</span><span class="t" style="left:628px;top:137px;color:#fff;letter-spacing:-0.202px;font-weight:700;">wspace-git</span><span class="t" style="left:712px;top:137px;color:#fff;letter-spacing:-0.84px;font-weight:700;"><span class="u">_</span><span class="u">_</span>ssgx</span><span class="t" style="left:771px;top:137px;color:#fff;letter-spacing:-0.132px;font-weight:700;">py.porttoy2</span><div style="position:absolute;left:510px;top:158px;width:599px;height:21px;background:#fff;"></div><div style="position:absolute;left:534px;top:158px;width:1px;height:21px;background:#e5e5e5;"></div><div style="position:absolute;left:834px;top:158px;width:1px;height:21px;background:#e5e5e5;"></div><div style="position:absolute;left:877px;top:158px;width:1px;height:21px;background:#e5e5e5;"></div><div style="position:absolute;left:929px;top:158px;width:1px;height:21px;background:#e5e5e5;"></div><div style="position:absolute;left:1049px;top:158px;width:1px;height:21px;background:#e5e5e5;"></div><span class="t" style="left:524px;top:158px;color:#000;letter-spacing:0.312px;">#</span><span class="t" style="left:542px;top:158px;color:#000;letter-spacing:-0.254px;">Name</span><svg style="position:absolute;left:589px;top:164px" width="9" height="8"><path d="M4 .5 6.2 3H1.8Z" fill="#333"/><path d="M1.5 4.5H6.5M0 6.5H8" stroke="#333" stroke-width="1"/></svg><span class="t" style="left:842px;top:158px;color:#000;letter-spacing:-0.615px;">Ext</span><span class="t" style="right:185.84px;top:158px;color:#000;letter-spacing:-0.836px;">Size</span><span class="t" style="left:937px;top:158px;color:#000;letter-spacing:-0.504px;">Type</span><span class="t" style="left:1056px;top:158px;color:#000;letter-spacing:0.33px;">Modified</span><div style="position:absolute;left:510px;top:179px;width:599px;height:790px;overflow:hidden;background:#fff"><div style="position:absolute;left:-510px;top:-179px;width:1109px;height:1056px"><div style="position:absolute;left:510px;top:179px;width:24px;height:800px;background:#f8f8f8;"></div><div style="position:absolute;left:534px;top:179px;width:1px;height:800px;background:#ebebeb;"></div><div style="position:absolute;left:535px;top:179px;width:299px;height:800px;background:#fcfcfc;"></div><span class="t" style="right:578.69px;top:180px;color:#808080;letter-spacing:-0.688px;">1</span><svg style="position:absolute;left:542px;top:181px;opacity:.5" width="13" height="16"><use href="#fold"/></svg><div style="position:absolute;left:557px;top:179px;width:26px;height:21px;border:1px solid #a9d1f7;background:#fff"></div><span class="t" style="left:560px;top:180px;color:#000;letter-spacing:0.246px;">.git</span><span class="t" style="left:937px;top:180px;color:#000;letter-spacing:-0.069px;word-spacing:0.069px;">File folder</span><span class="t" style="left:1056px;top:180px;color:#000;letter-spacing:-0.155px;">1/16/2017</span><span class="t" style="right:578.69px;top:201px;color:#808080;letter-spacing:-0.688px;">2</span><svg style="position:absolute;left:542px;top:202px;" width="13" height="16"><use href="#fold"/></svg><span class="t" style="left:560px;top:201px;color:#000;letter-spacing:-0.206px;">.idea</span><span class="t" style="left:937px;top:201px;color:#000;letter-spacing:-0.069px;word-spacing:0.069px;">File folder</span><span class="t" style="left:1056px;top:201px;color:#000;letter-spacing:-0.191px;word-spacing:0.191px;">1/2/2017 1</span><span class="t" style="right:578.69px;top:222px;color:#808080;letter-spacing:-0.688px;">3</span><svg style="position:absolute;left:542px;top:223px;" width="13" height="16"><use href="#fold"/></svg><span class="t" style="left:560px;top:222px;color:#000;letter-spacing:0.094px;">.ipynb<span class="u">_</span>checkpoints</span><span class="t" style="left:937px;top:222px;color:#000;letter-spacing:-0.069px;word-spacing:0.069px;">File folder</span><span class="t" style="left:1056px;top:222px;color:#000;letter-spacing:-0.191px;word-spacing:0.191px;">1/5/2017 1</span><span class="t" style="right:578.69px;top:243px;color:#808080;letter-spacing:-0.688px;">4</span><svg style="position:absolute;left:542px;top:244px;" width="13" height="16"><use href="#fold"/></svg><span class="t" style="left:560px;top:243px;color:#000;letter-spacing:0.328px;">build</span><span class="t" style="left:937px;top:243px;color:#000;letter-spacing:-0.069px;word-spacing:0.069px;">File folder</span><span class="t" style="left:1056px;top:243px;color:#000;letter-spacing:-0.206px;">12/20/2016</span><span class="t" style="right:578.69px;top:264px;color:#808080;letter-spacing:-0.688px;">5</span><svg style="position:absolute;left:542px;top:265px;" width="13" height="16"><use href="#fold"/></svg><span class="t" style="left:560px;top:264px;color:#000;letter-spacing:-0.004px;">presentation</span><span class="t" style="left:937px;top:264px;color:#000;letter-spacing:-0.069px;word-spacing:0.069px;">File folder</span><span class="t" style="left:1056px;top:264px;color:#000;letter-spacing:-0.155px;">1/12/2017</span><span class="t" style="right:578.69px;top:285px;color:#808080;letter-spacing:-0.688px;">6</span><svg style="position:absolute;left:542px;top:286px;" width="13" height="16"><use href="#fold"/></svg><span class="t" style="left:560px;top:285px;color:#000;letter-spacing:0.052px;">random</span><span class="t" style="left:937px;top:285px;color:#000;letter-spacing:-0.069px;word-spacing:0.069px;">File folder</span><span class="t" style="left:1056px;top:285px;color:#000;letter-spacing:-0.155px;">1/12/2017</span><span class="t" style="right:578.69px;top:306px;color:#808080;letter-spacing:-0.688px;">7</span><svg style="position:absolute;left:542px;top:307px;" width="13" height="16"><use href="#fold"/></svg><span class="t" style="left:560px;top:306px;color:#000;letter-spacing:-0.088px;">testdata</span><span class="t" style="left:937px;top:306px;color:#000;letter-spacing:-0.069px;word-spacing:0.069px;">File folder</span><span class="t" style="left:1056px;top:306px;color:#000;letter-spacing:-0.206px;">12/31/2016</span><span class="t" style="right:578.69px;top:327px;color:#808080;letter-spacing:-0.688px;">8</span><svg style="position:absolute;left:540px;top:328px;" width="18" height="18"><use href="#txt"/></svg><span class="t" style="left:560px;top:327px;color:#000;letter-spacing:0.163px;">.gitignore</span><span class="t" style="left:842px;top:327px;color:#000;letter-spacing:0.094px;">giti...</span><span class="t" style="right:185.00px;top:327px;color:#000;letter-spacing:-1.005px;word-spacing:1.005px;">1 KB</span><span class="t" style="left:937px;top:327px;color:#000;letter-spacing:-0.004px;word-spacing:0.004px;">Text Document</span><span class="t" style="left:1056px;top:327px;color:#000;letter-spacing:-0.191px;word-spacing:0.191px;">1/8/2017 3</span><span class="t" style="right:578.69px;top:348px;color:#808080;letter-spacing:-0.688px;">9</span><svg style="position:absolute;left:540px;top:349px;" width="18" height="18"><use href="#pdf"/></svg><span class="t" style="left:560px;top:348px;color:#000;letter-spacing:0.182px;">arrow.pdf</span><span class="t" style="left:842px;top:348px;color:#000;letter-spacing:0.438px;">pdf</span><span class="t" style="right:184.88px;top:348px;color:#000;letter-spacing:-0.875px;word-spacing:0.875px;">162 KB</span><span class="t" style="left:937px;top:348px;color:#000;letter-spacing:-0.024px;word-spacing:0.024px;">Adobe Acrobat Do...</span><span class="t" style="left:1056px;top:348px;color:#000;letter-spacing:-0.191px;word-spacing:0.191px;">1/2/2017 2</span><span class="t" style="right:578.68px;top:369px;color:#808080;letter-spacing:-0.68px;">10</span><svg style="position:absolute;left:540px;top:370px;" width="18" height="18"><use href="#blank"/></svg><span class="t" style="left:560px;top:369px;color:#000;letter-spacing:0.13px;">common.pxd</span><span class="t" style="left:842px;top:369px;color:#000;letter-spacing:0.214px;">pxd</span><span class="t" style="right:184.93px;top:369px;color:#000;letter-spacing:-0.926px;word-spacing:0.926px;">10 KB</span><span class="t" style="left:937px;top:369px;color:#000;letter-spacing:-0.621px;word-spacing:0.621px;">PXD File</span><span class="t" style="left:1056px;top:369px;color:#000;letter-spacing:-0.206px;">12/29/2016</span><span class="t" style="right:578.23px;top:390px;color:#808080;letter-spacing:-0.234px;">11</span><svg style="position:absolute;left:540px;top:391px;" width="18" height="18"><use href="#blank"/></svg><span class="t" style="left:560px;top:390px;color:#000;letter-spacing:0.131px;">common.pxi</span><span class="t" style="left:842px;top:390px;color:#000;letter-spacing:0.219px;">pxi</span><span class="t" style="right:185.00px;top:390px;color:#000;letter-spacing:-1.005px;word-spacing:1.005px;">1 KB</span><span class="t" style="left:937px;top:390px;color:#000;letter-spacing:-0.574px;word-spacing:0.574px;">PXI File</span><span class="t" style="left:1056px;top:390px;color:#000;letter-spacing:-0.206px;">12/29/2016</span><span class="t" style="right:578.68px;top:411px;color:#808080;letter-spacing:-0.68px;">12</span><svg style="position:absolute;left:540px;top:412px;" width="18" height="18"><use href="#blank"/></svg><span class="t" style="left:560px;top:411px;color:#000;letter-spacing:0.097px;">common.pyx</span><span class="t" style="left:842px;top:411px;color:#000;letter-spacing:0.104px;">pyx</span><span class="t" style="right:185.00px;top:411px;color:#000;letter-spacing:-1.005px;word-spacing:1.005px;">1 KB</span><span class="t" style="left:937px;top:411px;color:#000;letter-spacing:-0.67px;word-spacing:0.67px;">PYX File</span><span class="t" style="left:1056px;top:411px;color:#000;letter-spacing:-0.206px;">12/23/2016</span><span class="t" style="right:578.68px;top:432px;color:#808080;letter-spacing:-0.68px;">13</span><svg style="position:absolute;left:540px;top:433px;" width="18" height="18"><use href="#vsc"/></svg><span class="t" style="left:560px;top:432px;color:#000;letter-spacing:0.043px;">conda<span class="u">_</span>env<span class="u">_</span>porttoy2.yaml</span><span class="t" style="left:842px;top:432px;color:#000;letter-spacing:-0.086px;">yaml</span><span class="t" style="right:185.00px;top:432px;color:#000;letter-spacing:-1.005px;word-spacing:1.005px;">3 KB</span><span class="t" style="left:937px;top:432px;color:#000;letter-spacing:-0.241px;word-spacing:0.241px;">Visual Studio Code</span><span class="t" style="left:1056px;top:432px;color:#000;letter-spacing:-0.206px;">12/21/2016</span><span class="t" style="right:578.68px;top:453px;color:#808080;letter-spacing:-0.68px;">14</span><svg style="position:absolute;left:540px;top:454px;" width="18" height="18"><use href="#pdf"/></svg><span class="t" style="left:560px;top:453px;color:#000;letter-spacing:0.152px;">cours<span class="u">_</span>cython.pdf</span><span class="t" style="left:842px;top:453px;color:#000;letter-spacing:0.438px;">pdf</span><span class="t" style="right:184.55px;top:453px;color:#000;letter-spacing:-0.547px;word-spacing:0.547px;">4,131 ...</span><span class="t" style="left:937px;top:453px;color:#000;letter-spacing:-0.024px;word-spacing:0.024px;">Adobe Acrobat Do...</span><span class="t" style="left:1056px;top:453px;color:#000;letter-spacing:-0.191px;word-spacing:0.191px;">1/2/2017 4</span><span class="t" style="right:578.68px;top:474px;color:#808080;letter-spacing:-0.68px;">15</span><svg style="position:absolute;left:540px;top:475px;" width="18" height="18"><use href="#pdf"/></svg><span class="t" style="left:560px;top:474px;color:#000;letter-spacing:0.263px;">cython.pdf</span><span class="t" style="left:842px;top:474px;color:#000;letter-spacing:0.438px;">pdf</span><span class="t" style="right:184.88px;top:474px;color:#000;letter-spacing:-0.875px;word-spacing:0.875px;">216 KB</span><span class="t" style="left:937px;top:474px;color:#000;letter-spacing:-0.024px;word-spacing:0.024px;">Adobe Acrobat Do...</span><span class="t" style="left:1056px;top:474px;color:#000;letter-spacing:-0.206px;">12/29/2016</span><span class="t" style="right:578.68px;top:495px;color:#808080;letter-spacing:-0.68px;">16</span><svg style="position:absolute;left:540px;top:496px;" width="18" height="18"><use href="#blank"/></svg><span class="t" style="left:560px;top:495px;color:#000;letter-spacing:0.007px;">cython<span class="u">_</span>extensiontype<span class="u">_</span>arrays.ipynb</span><span class="t" style="left:842px;top:495px;color:#000;letter-spacing:0.263px;">ipynb</span><span class="t" style="right:184.93px;top:495px;color:#000;letter-spacing:-0.926px;word-spacing:0.926px;">99 KB</span><span class="t" style="left:937px;top:495px;color:#000;letter-spacing:-0.521px;word-spacing:0.521px;">IPYNB File</span><span class="t" style="left:1056px;top:495px;color:#000;letter-spacing:-0.191px;word-spacing:0.191px;">1/3/2017 9</span><span class="t" style="right:578.68px;top:516px;color:#808080;letter-spacing:-0.68px;">17</span><svg style="position:absolute;left:540px;top:517px;" width="18" height="18"><use href="#blank"/></svg><span class="t" style="left:560px;top:516px;color:#000;letter-spacing:0.08px;">cython<span class="u">_</span>extensiontype<span class="u">_</span>memview.ipynb</span><span class="t" style="left:842px;top:516px;color:#000;letter-spacing:0.263px;">ipynb</span><span class="t" style="right:184.93px;top:516px;color:#000;letter-spacing:-0.926px;word-spacing:0.926px;">14 KB</span><span class="t" style="left:937px;top:516px;color:#000;letter-spacing:-0.521px;word-spacing:0.521px;">IPYNB File</span><span class="t" style="left:1056px;top:516px;color:#000;letter-spacing:-0.191px;word-spacing:0.191px;">1/2/2017 4</span><span class="t" style="right:578.68px;top:537px;color:#808080;letter-spacing:-0.68px;">18</span><svg style="position:absolute;left:540px;top:538px;" width="18" height="18"><use href="#pdf"/></svg><span class="t" style="left:560px;top:537px;color:#000;letter-spacing:0.163px;">cython-docs2.pdf</span><span class="t" style="left:842px;top:537px;color:#000;letter-spacing:0.438px;">pdf</span><span class="t" style="right:184.88px;top:537px;color:#000;letter-spacing:-0.875px;word-spacing:0.875px;">268 KB</span><span class="t" style="left:937px;top:537px;color:#000;letter-spacing:-0.024px;word-spacing:0.024px;">Adobe Acrobat Do...</span><span class="t" style="left:1056px;top:537px;color:#000;letter-spacing:-0.206px;">12/28/2016</span><span class="t" style="right:578.68px;top:558px;color:#808080;letter-spacing:-0.68px;">19</span><svg style="position:absolute;left:540px;top:559px;" width="18" height="18"><use href="#blank"/></svg><span class="t" style="left:560px;top:558px;color:#000;letter-spacing:0.174px;">eg<span class="u">_</span>bint<span class="u">_</span>bool<span class="u">_</span>cython<span class="u">_</span>and<span class="u">_</span>numpy<span class="u">_</span>boolean.ipynb</span><span class="t" style="left:842px;top:558px;color:#000;letter-spacing:0.263px;">ipynb</span><span class="t" style="right:184.88px;top:558px;color:#000;letter-spacing:-0.875px;word-spacing:0.875px;">177 KB</span><span class="t" style="left:937px;top:558px;color:#000;letter-spacing:-0.521px;word-spacing:0.521px;">IPYNB File</span><span class="t" style="left:1056px;top:558px;color:#000;letter-spacing:-0.191px;word-spacing:0.191px;">1/1/2017 1</span><span class="t" style="right:578.68px;top:579px;color:#808080;letter-spacing:-0.68px;">20</span><svg style="position:absolute;left:540px;top:580px;" width="18" height="18"><use href="#blank"/></svg><span class="t" style="left:560px;top:579px;color:#000;letter-spacing:-0.116px;">eg<span class="u">_</span>class<span class="u">_</span>embedded<span class="u">_</span>pointers.pyx</span><span class="t" style="left:842px;top:579px;color:#000;letter-spacing:0.104px;">pyx</span><span class="t" style="right:185.00px;top:579px;color:#000;letter-spacing:-1.005px;word-spacing:1.005px;">2 KB</span><span class="t" style="left:937px;top:579px;color:#000;letter-spacing:-0.67px;word-spacing:0.67px;">PYX File</span><span class="t" style="left:1056px;top:579px;color:#000;letter-spacing:-0.206px;">10/29/2016</span><span class="t" style="right:578.68px;top:600px;color:#808080;letter-spacing:-0.68px;">21</span><svg style="position:absolute;left:540px;top:601px;" width="18" height="18"><use href="#blank"/></svg><span class="t" style="left:560px;top:600px;color:#000;letter-spacing:0.045px;">eg<span class="u">_</span>cython<span class="u">_</span>pandas.ipynb</span><span class="t" style="left:842px;top:600px;color:#000;letter-spacing:0.263px;">ipynb</span><span class="t" style="right:184.88px;top:600px;color:#000;letter-spacing:-0.875px;word-spacing:0.875px;">197 KB</span><span class="t" style="left:937px;top:600px;color:#000;letter-spacing:-0.521px;word-spacing:0.521px;">IPYNB File</span><span class="t" style="left:1056px;top:600px;color:#000;letter-spacing:-0.206px;">12/29/2016</span><span class="t" style="right:578.68px;top:621px;color:#808080;letter-spacing:-0.68px;">22</span><svg style="position:absolute;left:540px;top:622px;" width="18" height="18"><use href="#blank"/></svg><span class="t" style="left:560px;top:621px;color:#000;letter-spacing:-0.021px;">eg<span class="u">_</span>json<span class="u">_</span>dict<span class="u">_</span>class.ipynb</span><span class="t" style="left:842px;top:621px;color:#000;letter-spacing:0.263px;">ipynb</span><span class="t" style="right:184.93px;top:621px;color:#000;letter-spacing:-0.926px;word-spacing:0.926px;">14 KB</span><span class="t" style="left:937px;top:621px;color:#000;letter-spacing:-0.521px;word-spacing:0.521px;">IPYNB File</span><span class="t" style="left:1056px;top:621px;color:#000;letter-spacing:-0.155px;">1/16/2017</span><span class="t" style="right:578.68px;top:642px;color:#808080;letter-spacing:-0.68px;">23</span><svg style="position:absolute;left:540px;top:643px;" width="18" height="18"><use href="#blank"/></svg><span class="t" style="left:560px;top:642px;color:#000;letter-spacing:0.097px;">eg<span class="u">_</span>numpy<span class="u">_</span>ndarray<span class="u">_</span>cython.ipynb</span><span class="t" style="left:842px;top:642px;color:#000;letter-spacing:0.263px;">ipynb</span><span class="t" style="right:184.88px;top:642px;color:#000;letter-spacing:-0.875px;word-spacing:0.875px;">222 KB</span><span class="t" style="left:937px;top:642px;color:#000;letter-spacing:-0.521px;word-spacing:0.521px;">IPYNB File</span><span class="t" style="left:1056px;top:642px;color:#000;letter-spacing:-0.191px;word-spacing:0.191px;">1/2/2017 3</span><span class="t" style="right:578.68px;top:663px;color:#808080;letter-spacing:-0.68px;">24</span><svg style="position:absolute;left:540px;top:664px;" width="18" height="18"><use href="#blank"/></svg><span class="t" style="left:560px;top:663px;color:#000;letter-spacing:0.051px;">eg<span class="u">_</span>numpy<span class="u">_</span>ndarray<span class="u">_</span>type.ipynb</span><span class="t" style="left:842px;top:663px;color:#000;letter-spacing:0.263px;">ipynb</span><span class="t" style="right:184.88px;top:663px;color:#000;letter-spacing:-0.875px;word-spacing:0.875px;">177 KB</span><span class="t" style="left:937px;top:663px;color:#000;letter-spacing:-0.521px;word-spacing:0.521px;">IPYNB File</span><span class="t" style="left:1056px;top:663px;color:#000;letter-spacing:-0.206px;">12/24/2016</span><span class="t" style="right:578.68px;top:684px;color:#808080;letter-spacing:-0.68px;">25</span><svg style="position:absolute;left:540px;top:685px;" width="18" height="18"><use href="#blank"/></svg><span class="t" style="left:560px;top:684px;color:#000;letter-spacing:-0.042px;">eg<span class="u">_</span>present-01.ipynb</span><span class="t" style="left:842px;top:684px;color:#000;letter-spacing:0.263px;">ipynb</span><span class="t" style="right:185.00px;top:684px;color:#000;letter-spacing:-1.005px;word-spacing:1.005px;">5 KB</span><span class="t" style="left:937px;top:684px;color:#000;letter-spacing:-0.521px;word-spacing:0.521px;">IPYNB File</span><span class="t" style="left:1056px;top:684px;color:#000;letter-spacing:-0.191px;word-spacing:0.191px;">1/5/2017 1</span><span class="t" style="right:578.68px;top:705px;color:#808080;letter-spacing:-0.68px;">26</span><svg style="position:absolute;left:540px;top:706px;" width="18" height="18"><use href="#blank"/></svg><span class="t" style="left:560px;top:705px;color:#000;letter-spacing:0.072px;">eg<span class="u">_</span>randomfactory<span class="u">_</span>numpy<span class="u">_</span>internals.ipynb</span><span class="t" style="left:842px;top:705px;color:#000;letter-spacing:0.263px;">ipynb</span><span class="t" style="right:184.93px;top:705px;color:#000;letter-spacing:-0.926px;word-spacing:0.926px;">64 KB</span><span class="t" style="left:937px;top:705px;color:#000;letter-spacing:-0.521px;word-spacing:0.521px;">IPYNB File</span><span class="t" style="left:1056px;top:705px;color:#000;letter-spacing:-0.191px;word-spacing:0.191px;">1/4/2017 1</span><span class="t" style="right:578.68px;top:726px;color:#808080;letter-spacing:-0.68px;">27</span><svg style="position:absolute;left:540px;top:727px;" width="18" height="18"><use href="#blank"/></svg><span class="t" style="left:560px;top:726px;color:#000;letter-spacing:0.152px;">eg<span class="u">_</span>subportfolio<span class="u">_</span>debt<span class="u">_</span>digitalcds.ipynb</span><span class="t" style="left:842px;top:726px;color:#000;letter-spacing:0.263px;">ipynb</span><span class="t" style="right:184.93px;top:726px;color:#000;letter-spacing:-0.926px;word-spacing:0.926px;">25 KB</span><span class="t" style="left:937px;top:726px;color:#000;letter-spacing:-0.521px;word-spacing:0.521px;">IPYNB File</span><span class="t" style="left:1056px;top:726px;color:#000;letter-spacing:-0.191px;word-spacing:0.191px;">1/4/2017 1</span><span class="t" style="right:578.68px;top:747px;color:#808080;letter-spacing:-0.68px;">28</span><svg style="position:absolute;left:540px;top:748px;" width="18" height="18"><use href="#blank"/></svg><span class="t" style="left:560px;top:747px;color:#000;letter-spacing:0.054px;">eg-nbresent.ipynb</span><span class="t" style="left:842px;top:747px;color:#000;letter-spacing:0.263px;">ipynb</span><span class="t" style="right:184.88px;top:747px;color:#000;letter-spacing:-0.875px;word-spacing:0.875px;">131 KB</span><span class="t" style="left:937px;top:747px;color:#000;letter-spacing:-0.521px;word-spacing:0.521px;">IPYNB File</span><span class="t" style="left:1056px;top:747px;color:#000;letter-spacing:-0.191px;word-spacing:0.191px;">1/5/2017 1</span><span class="t" style="right:578.68px;top:768px;color:#808080;letter-spacing:-0.68px;">29</span><svg style="position:absolute;left:540px;top:769px;" width="18" height="18"><use href="#blank"/></svg><span class="t" style="left:560px;top:768px;color:#000;letter-spacing:0.025px;">entities.pxd</span><span class="t" style="left:842px;top:768px;color:#000;letter-spacing:0.214px;">pxd</span><span class="t" style="right:185.00px;top:768px;color:#000;letter-spacing:-1.005px;word-spacing:1.005px;">1 KB</span><span class="t" style="left:937px;top:768px;color:#000;letter-spacing:-0.621px;word-spacing:0.621px;">PXD File</span><span class="t" style="left:1056px;top:768px;color:#000;letter-spacing:-0.191px;word-spacing:0.191px;">1/1/2017 1</span><span class="t" style="right:578.68px;top:789px;color:#808080;letter-spacing:-0.68px;">30</span><svg style="position:absolute;left:540px;top:790px;" width="18" height="18"><use href="#blank"/></svg><span class="t" style="left:560px;top:789px;color:#000;letter-spacing:-0.003px;">entities.pyx</span><span class="t" style="left:842px;top:789px;color:#000;letter-spacing:0.104px;">pyx</span><span class="t" style="right:185.00px;top:789px;color:#000;letter-spacing:-1.005px;word-spacing:1.005px;">2 KB</span><span class="t" style="left:937px;top:789px;color:#000;letter-spacing:-0.67px;word-spacing:0.67px;">PYX File</span><span class="t" style="left:1056px;top:789px;color:#000;letter-spacing:-0.191px;word-spacing:0.191px;">1/2/2017 1</span><span class="t" style="right:578.68px;top:810px;color:#808080;letter-spacing:-0.68px;">31</span><svg style="position:absolute;left:540px;top:811px;" width="18" height="18"><use href="#blank"/></svg><span class="t" style="left:560px;top:810px;color:#000;letter-spacing:0.066px;">entities<span class="u">_</span>single<span class="u">_</span>factor.pxd</span><span class="t" style="left:842px;top:810px;color:#000;letter-spacing:0.214px;">pxd</span><span class="t" style="right:185.00px;top:810px;color:#000;letter-spacing:-1.005px;word-spacing:1.005px;">1 KB</span><span class="t" style="left:937px;top:810px;color:#000;letter-spacing:-0.621px;word-spacing:0.621px;">PXD File</span><span class="t" style="left:1056px;top:810px;color:#000;letter-spacing:-0.191px;word-spacing:0.191px;">1/2/2017 1</span><span class="t" style="right:578.68px;top:831px;color:#808080;letter-spacing:-0.68px;">32</span><svg style="position:absolute;left:540px;top:832px;" width="18" height="18"><use href="#blank"/></svg><span class="t" style="left:560px;top:831px;color:#000;letter-spacing:0.052px;">entities<span class="u">_</span>single<span class="u">_</span>factor.pyx</span><span class="t" style="left:842px;top:831px;color:#000;letter-spacing:0.104px;">pyx</span><span class="t" style="right:185.00px;top:831px;color:#000;letter-spacing:-1.005px;word-spacing:1.005px;">8 KB</span><span class="t" style="left:937px;top:831px;color:#000;letter-spacing:-0.67px;word-spacing:0.67px;">PYX File</span><span class="t" style="left:1056px;top:831px;color:#000;letter-spacing:-0.191px;word-spacing:0.191px;">1/2/2017 2</span><span class="t" style="right:578.68px;top:852px;color:#808080;letter-spacing:-0.68px;">33</span><svg style="position:absolute;left:540px;top:853px;" width="18" height="18"><use href="#blank"/></svg><span class="t" style="left:560px;top:852px;color:#000;letter-spacing:0.019px;">entities<span class="u">_</span>sow.pyx</span><span class="t" style="left:842px;top:852px;color:#000;letter-spacing:0.104px;">pyx</span><span class="t" style="right:185.00px;top:852px;color:#000;letter-spacing:-1.005px;word-spacing:1.005px;">2 KB</span><span class="t" style="left:937px;top:852px;color:#000;letter-spacing:-0.67px;word-spacing:0.67px;">PYX File</span><span class="t" style="left:1056px;top:852px;color:#000;letter-spacing:-0.191px;word-spacing:0.191px;">1/2/2017 1</span><span class="t" style="right:578.68px;top:873px;color:#808080;letter-spacing:-0.68px;">34</span><svg style="position:absolute;left:540px;top:874px;" width="18" height="18"><use href="#ie"/></svg><span class="t" style="left:560px;top:873px;color:#000;letter-spacing:-0.337px;">hse.svg</span><span class="t" style="left:842px;top:873px;color:#000;letter-spacing:-0.229px;">svg</span><span class="t" style="right:185.00px;top:873px;color:#000;letter-spacing:-1.005px;word-spacing:1.005px;">3 KB</span><span class="t" style="left:937px;top:873px;color:#000;letter-spacing:-0.398px;word-spacing:0.398px;">SVG Document</span><span class="t" style="left:1056px;top:873px;color:#000;letter-spacing:-0.191px;word-spacing:0.191px;">1/5/2017 1</span><span class="t" style="right:578.68px;top:894px;color:#808080;letter-spacing:-0.68px;">35</span><svg style="position:absolute;left:540px;top:895px;" width="18" height="18"><use href="#npp"/></svg><span class="t" style="left:560px;top:894px;color:#000;letter-spacing:-0.192px;">hse.xml</span><span class="t" style="left:842px;top:894px;color:#000;letter-spacing:0.109px;">xml</span><span class="t" style="right:185.00px;top:894px;color:#000;letter-spacing:-1.005px;word-spacing:1.005px;">1 KB</span><span class="t" style="left:937px;top:894px;color:#000;letter-spacing:0.079px;word-spacing:-0.079px;">Notepad++ Docu...</span><span class="t" style="left:1056px;top:894px;color:#000;letter-spacing:-0.191px;word-spacing:0.191px;">1/5/2017 1</span><span class="t" style="right:578.68px;top:915px;color:#808080;letter-spacing:-0.68px;">36</span><svg style="position:absolute;left:540px;top:916px;" width="18" height="18"><use href="#ie"/></svg><span class="t" style="left:560px;top:915px;color:#000;letter-spacing:-0.246px;">hse-hse.svg</span><span class="t" style="left:842px;top:915px;color:#000;letter-spacing:-0.229px;">svg</span><span class="t" style="right:184.93px;top:915px;color:#000;letter-spacing:-0.926px;word-spacing:0.926px;">39 KB</span><span class="t" style="left:937px;top:915px;color:#000;letter-spacing:-0.398px;word-spacing:0.398px;">SVG Document</span><span class="t" style="left:1056px;top:915px;color:#000;letter-spacing:-0.191px;word-spacing:0.191px;">1/5/2017 1</span><span class="t" style="right:578.68px;top:936px;color:#808080;letter-spacing:-0.68px;">37</span><svg style="position:absolute;left:540px;top:937px;" width="18" height="18"><use href="#blank"/></svg><span class="t" style="left:560px;top:936px;color:#000;letter-spacing:0.195px;">junk.ipynb</span><span class="t" style="left:842px;top:936px;color:#000;letter-spacing:0.263px;">ipynb</span><span class="t" style="right:185.00px;top:936px;color:#000;letter-spacing:-1.005px;word-spacing:1.005px;">3 KB</span><span class="t" style="left:937px;top:936px;color:#000;letter-spacing:-0.521px;word-spacing:0.521px;">IPYNB File</span><span class="t" style="left:1056px;top:936px;color:#000;letter-spacing:-0.191px;word-spacing:0.191px;">1/1/2017 1</span><span class="t" style="right:578.68px;top:957px;color:#808080;letter-spacing:-0.68px;">38</span><svg style="position:absolute;left:540px;top:958px;" width="18" height="18"><use href="#npp"/></svg><span class="t" style="left:560px;top:957px;color:#000;letter-spacing:-0.004px;">main.py</span><span class="t" style="left:842px;top:957px;color:#000;letter-spacing:0.156px;">py</span><span class="t" style="right:185.00px;top:957px;color:#000;letter-spacing:-1.005px;word-spacing:1.005px;">3 KB</span><span class="t" style="left:937px;top:957px;color:#000;letter-spacing:0.079px;word-spacing:-0.079px;">Notepad++ Docu...</span><span class="t" style="left:1056px;top:957px;color:#000;letter-spacing:-0.206px;">12/20/2016</span></div></div><div style="position:absolute;left:510px;top:969px;width:599px;height:17px;background:#f0f0f0;"></div><div style="position:absolute;left:527px;top:969px;width:582px;height:15px;background:#cdcdcd;"></div><svg style="position:absolute;left:514px;top:972px" width="9" height="10"><path d="M7 1.2 2.6 5 7 8.8" fill="none" stroke="#505050" stroke-width="1.7"/></svg><div style="position:absolute;left:510px;top:986px;width:599px;height:23px;background:#f0f0f0;"></div><span class="t" style="left:514px;top:988px;color:#000;letter-spacing:-0.443px;word-spacing:0.443px;">107 items (402.61 GB free)</span><div style="position:absolute;left:712px;top:988px;width:1px;height:18px;background:#c8c8c8;"></div><span class="t" style="left:718px;top:988px;color:#000;letter-spacing:-0.338px;word-spacing:0.338px;">total: 20.89 MB (21,905,832 bytes)</span><div style="position:absolute;left:1018px;top:988px;width:1px;height:18px;background:#c8c8c8;"></div><svg style="position:absolute;left:1024px;top:995px" width="15" height="9"><path d="M2.5 1H11.5L13.5 4H.5Z" fill="#d8d8d8"/><rect x=".5" y="4" width="13" height="3.6" rx=".6" fill="#3c3c3c"/><circle cx="10.8" cy="5.8" r=".9" fill="#4ade3a"/></svg><span class="t" style="left:1044px;top:988px;color:#000;letter-spacing:-0.559px;word-spacing:0.559px;">drive D:  528.00 GB</span><div style="position:absolute;left:84px;top:1010px;width:1025px;height:46px;overflow:hidden;background:#fff"><div style="position:absolute;left:-84px;top:-1010px;width:1109px;height:1056px"><div style="position:absolute;left:328px;top:1000px;width:15px;height:56px;background:#f0f0f0;"></div><div style="position:absolute;left:328px;top:1000px;width:15px;height:39px;background:#cdcdcd;"></div><div style="position:absolute;left:343px;top:1000px;width:4px;height:56px;background:#f4f4f4;"></div><svg style="position:absolute;left:331px;top:1044px" width="10" height="7"><path d="M1 1 4.7 4.8 8.4 1" fill="none" stroke="#505050" stroke-width="1.7"/></svg><svg style="position:absolute;left:116px;top:1003px" width="16" height="16"><rect width="16" height="16" fill="#8c9690"/><ellipse cx="8" cy="6.5" rx="4.6" ry="6" fill="#7a6a62"/><rect x="0" y="12" width="16" height="4" fill="#6e7672"/><ellipse cx="8" cy="10" rx="3.4" ry="3.4" fill="#5a4a44"/></svg><svg style="position:absolute;left:116px;top:1027px" width="16" height="16"><rect width="16" height="16" fill="#27324e"/><rect x="0" y="0" width="3" height="16" fill="#1c2540"/><rect x="13" y="8" width="3" height="8" fill="#b8402a"/><ellipse cx="8.2" cy="8.2" rx="4.6" ry="6" fill="#d6998a"/><ellipse cx="8.2" cy="3.8" rx="4" ry="2.4" fill="#e0b0a0"/><path d="M5 7.4H7.4M9 7.4H11.4" stroke="#5a3a34" stroke-width="1"/><path d="M6.6 12H9.8" stroke="#8a4a44" stroke-width=".9"/><rect x="2" y="13.5" width="12" height="2.5" fill="#3a1f1c"/></svg><span class="t" style="left:137px;top:1001px;color:#000;letter-spacing:-0.281px;word-spacing:0.281px;">Peter Crosbie</span><span class="t" style="left:137px;top:1025px;color:#000;letter-spacing:0.219px;">pjc</span><div style="position:absolute;left:368px;top:1003px;width:12px;height:15px;border:1px solid #8e8e8e;background:#fdfdfd"></div><span class="t" style="left:386px;top:1003px;color:#000;letter-spacing:0.095px;">portfolio.cp35-win<span class="u">_</span>amd64.pyd</span><span class="t" style="left:626px;top:1003px;color:#6d6d6d;letter-spacing:-0.338px;word-spacing:0.338px;">1/2/2017 2:30 PM</span><span class="t" style="left:746px;top:1003px;color:#6d6d6d;letter-spacing:-0.621px;word-spacing:0.621px;">PYD File</span><span class="t" style="right:177.93px;top:1003px;color:#6d6d6d;letter-spacing:-0.926px;word-spacing:0.926px;">36 KB</span><svg style="position:absolute;left:366px;top:1025px" width="16" height="17"><path d="M2.5 .5H9.5L13.5 4.5V15.5H2.5Z" fill="#fff" stroke="#8e8e8e"/><path d="M9.5 .5V4.5H13.5" fill="none" stroke="#8e8e8e"/><circle cx="5" cy="11.2" r="4.3" fill="#1fa63a" stroke="#fff" stroke-width=".8"/><path d="M2.9 11.2 4.5 12.8 7.2 9.6" fill="none" stroke="#fff" stroke-width="1.4"/></svg><span class="t" style="left:386px;top:1024px;color:#000;letter-spacing:0.279px;">portfolio.pxd</span><span class="t" style="left:626px;top:1024px;color:#6d6d6d;letter-spacing:-0.338px;word-spacing:0.338px;">1/2/2017 2:30 PM</span><span class="t" style="left:746px;top:1024px;color:#6d6d6d;letter-spacing:-0.621px;word-spacing:0.621px;">PXD File</span><span class="t" style="right:178.00px;top:1024px;color:#6d6d6d;letter-spacing:-1.005px;word-spacing:1.005px;">1 KB</span><svg style="position:absolute;left:366px;top:1046px" width="16" height="17"><path d="M2.5 .5H9.5L13.5 4.5V15.5H2.5Z" fill="#fff" stroke="#8e8e8e"/><path d="M9.5 .5V4.5H13.5" fill="none" stroke="#8e8e8e"/><circle cx="5" cy="11.2" r="4.3" fill="#1fa63a" stroke="#fff" stroke-width=".8"/><path d="M2.9 11.2 4.5 12.8 7.2 9.6" fill="none" stroke="#fff" stroke-width="1.4"/></svg><span class="t" style="left:386px;top:1045px;color:#000;letter-spacing:0.254px;">portfolio.pyx</span><span class="t" style="left:626px;top:1045px;color:#6d6d6d;letter-spacing:-0.338px;word-spacing:0.338px;">1/2/2017 2:30 PM</span><span class="t" style="left:746px;top:1045px;color:#6d6d6d;letter-spacing:-0.67px;word-spacing:0.67px;">PYX File</span><span class="t" style="right:178.00px;top:1045px;color:#6d6d6d;letter-spacing:-1.005px;word-spacing:1.005px;">2 KB</span></div></div><div style="position:absolute;left:84px;top:1010px;width:1025px;height:14px;background:linear-gradient(rgba(0,0,0,.30),rgba(0,0,0,.12) 30%,rgba(0,0,0,.04) 65%,rgba(0,0,0,0))"></div>
</body></html>
